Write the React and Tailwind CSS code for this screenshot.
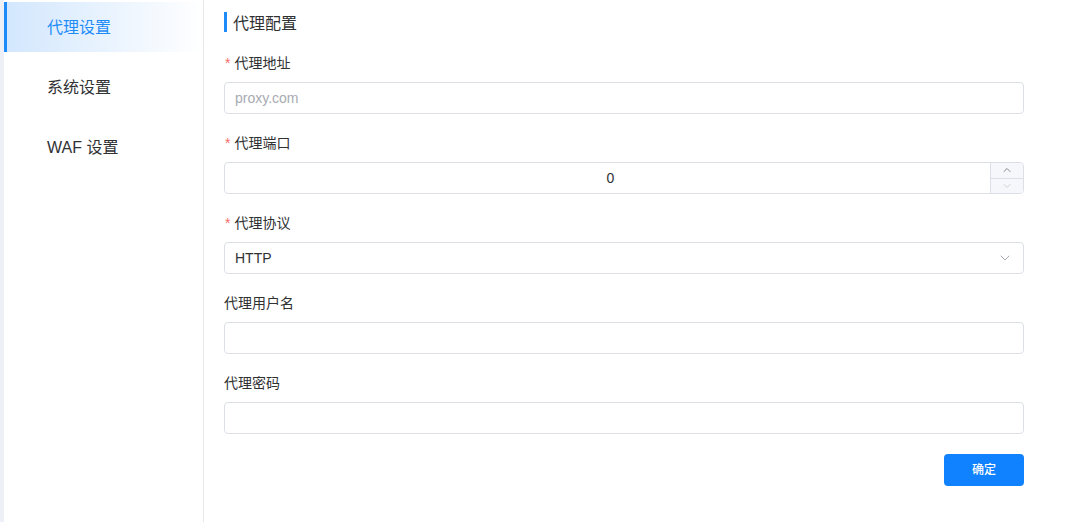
import { ChevronUp, ChevronDown } from 'lucide-react';

const menus = ['代理设置', '系统设置', 'WAF 设置'];

function Label({ required, children }) {
  return (
    <div className="h-[22px] flex items-center text-[14px] text-[#303133]">
      {required && <span className="text-[#f56c6c] mr-[4px] ml-[1px] text-[14px]">*</span>}
      <span>{children}</span>
    </div>
  );
}

function Field({ label, required, children }) {
  return (
    <div className="mb-[18px]">
      <Label required={required}>{label}</Label>
      <div className="mt-[8px]">{children}</div>
    </div>
  );
}

function TextInput({ placeholder }) {
  return (
    <div className="h-[32px] border border-[#dcdfe6] rounded-[4px] flex items-center px-[10px] text-[14px] bg-white">
      <span className="text-[#a8abb2]">{placeholder}</span>
    </div>
  );
}

export default function App() {
  return (
    <div
      className="flex h-[522px] w-[1080px] bg-white"
      style={{ fontFamily: '"Liberation Sans", "Noto Sans CJK SC", sans-serif' }}
    >
      <div className="w-[4px] bg-[#eef0f7]" />

      {/* 侧边菜单 */}
      <div className="w-[200px] border-r border-[#e8e8ec] pt-[2px] flex flex-col gap-[10px]">
        {menus.map((m, i) => (
          <div
            key={m}
            className={`h-[50px] flex items-center pt-[2px] text-[16px] ${
              i === 0
                ? 'border-l-[3px] border-[#1d8cf8] pl-[40px] text-[#1d8cf8] bg-gradient-to-r from-[#d3e7fd] to-white'
                : 'pl-[43px] text-[#303133]'
            }`}
          >
            {m}
          </div>
        ))}
      </div>

      {/* 主体 */}
      <div className="pl-[20px] pt-[12px]">
        <div className="w-[800px]">
          <div className="flex items-center h-[20px]">
            <div className="w-[3px] h-[20px] bg-[#1d8cf8]" />
            <span className="ml-[6px] pt-[3px] text-[16px] text-[#303133]">代理配置</span>
          </div>

          <div className="mt-[20px]">
            <Field label="代理地址" required>
              <TextInput placeholder="proxy.com" />
            </Field>

            <Field label="代理端口" required>
              <div className="h-[32px] border border-[#dcdfe6] rounded-[4px] flex bg-white overflow-hidden">
                <div className="flex-1 flex items-center justify-center pl-[6px] text-[14px] text-[#303133]">0</div>
                <div className="w-[33px] border-l border-[#dcdfe6] bg-[#f5f7fa] flex flex-col">
                  <div className="flex-1 flex items-center justify-center border-b border-[#dcdfe6]">
                    <ChevronUp size={12} strokeWidth={1.5} className="text-[#606266]" />
                  </div>
                  <div className="flex-1 flex items-center justify-center">
                    <ChevronDown size={12} strokeWidth={1.5} className="text-[#c0c4cc]" />
                  </div>
                </div>
              </div>
            </Field>

            <Field label="代理协议" required>
              <div className="h-[32px] border border-[#dcdfe6] rounded-[4px] flex items-center justify-between pl-[10px] pr-[10px] text-[14px] bg-white">
                <span className="text-[#303133]">HTTP</span>
                <ChevronDown size={16} strokeWidth={1.5} className="text-[#a8abb2]" />
              </div>
            </Field>

            <Field label="代理用户名">
              <TextInput placeholder="" />
            </Field>

            <Field label="代理密码">
              <TextInput placeholder="" />
            </Field>
          </div>

          <div className="flex justify-end mt-[20px]">
            <button className="w-[80px] h-[32px] rounded-[4px] bg-[#1082ff] text-white text-[12px] font-medium">
              确定
            </button>
          </div>
        </div>
      </div>
    </div>
  );
}
